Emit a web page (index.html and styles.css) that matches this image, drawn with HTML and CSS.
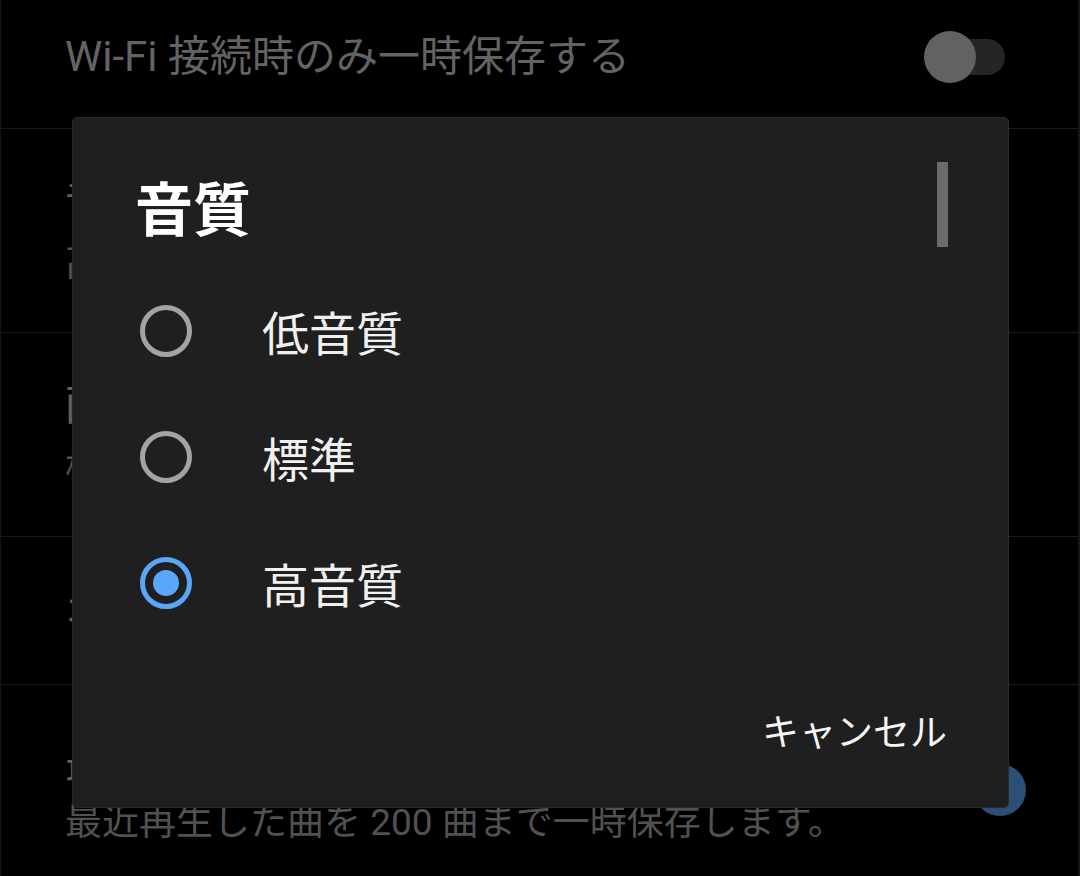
FILE: index.html
```html
<!DOCTYPE html>
<html lang="ja">
<head>
<meta charset="utf-8">
<title>音質</title>
<link rel="stylesheet" href="styles.css">
</head>
<body>
<div class="screen">
  <div class="list">
    <div class="row row-first">
      <div class="texts"><div class="title">Wi-Fi 接続時のみ一時保存する</div></div>
      <div class="switch"><span class="track"></span><span class="thumb"></span></div>
    </div>
    <div class="row row-two">
      <div class="texts">
        <div class="title">音質（モバイル ネットワーク）</div>
        <div class="sub">高音質</div>
      </div>
    </div>
    <div class="row row-two">
      <div class="texts">
        <div class="title">画質（モバイル ネットワーク）</div>
        <div class="sub">標準</div>
      </div>
    </div>
    <div class="row row-one">
      <div class="texts"><div class="title">オフライン ミックステープ</div></div>
    </div>
    <div class="row row-last">
      <div class="texts">
        <div class="title">最近再生した曲を一時保存</div>
        <div class="sub">最近再生した曲を 200 曲まで一時保存します。</div>
      </div>
      <div class="switch on"><span class="track"></span><span class="thumb"></span></div>
    </div>
  </div>

  <div class="dialog">
    <h1 class="dialog-title">音質</h1>
    <span class="scrollbar"></span>
    <ul class="options">
      <li class="option"><span class="radio"></span><span class="label">低音質</span></li>
      <li class="option"><span class="radio"></span><span class="label">標準</span></li>
      <li class="option"><span class="radio checked"></span><span class="label">高音質</span></li>
    </ul>
    <div class="actions"><span class="btn">キャンセル</span></div>
  </div>
</div>
</body>
</html>
```
FILE: styles.css
```css
* { box-sizing: border-box; }
html, body { margin: 0; padding: 0; background: #000; }
body {
  font-family: Roboto, "Noto Sans CJK JP", sans-serif;
  width: 1080px;
  height: 876px;
  overflow: hidden;
}
.screen {
  position: relative;
  width: 1080px;
  height: 876px;
  background: #000;
  border-left: 1px solid #161616;
  border-right: 2px solid #161616;
  overflow: hidden;
}
.list {
  display: flex;
  flex-direction: column;
}
.row {
  display: flex;
  align-items: center;
  justify-content: space-between;
  padding: 0 52px 0 64px;
  border-bottom: 1px solid #1a1a1a;
}
.row-first { height: 129px; padding-bottom: 14px; }
.row-two { height: 204px; align-items: flex-start; padding-top: 45px; }
.row-one { height: 148px; }
.row-last { height: 210px; border-bottom: none; align-items: center; }
.row-last .texts { padding-top: 8px; gap: 2px; }
.texts { display: flex; flex-direction: column; gap: 6px; }
.title {
  font-size: 42px;
  line-height: 56px;
  color: #636363;
  white-space: nowrap;
}
.sub {
  font-size: 37px;
  line-height: 56px;
  color: #515151;
  white-space: nowrap;
}
.switch {
  position: relative;
  width: 102px;
  height: 52px;
  flex: none;
}
.switch .track {
  position: absolute;
  left: 8px;
  top: 8px;
  width: 73px;
  height: 36px;
  border-radius: 18px;
  background: #252525;
}
.switch .thumb {
  position: absolute;
  left: 0;
  top: 0;
  width: 52px;
  height: 52px;
  border-radius: 50%;
  background: #626262;
}
.switch.on .track { left: 20px; width: 70px; background: #1d3550; }
.switch.on .thumb { left: 50px; background: #2c4f78; }

.dialog {
  position: absolute;
  left: 71px;
  top: 117px;
  width: 937px;
  height: 691px;
  background: #1f1f1f;
  border: 1px solid #2b2b2b;
  border-radius: 5px;
  display: flex;
  flex-direction: column;
  color: #f2f2f2;
  font-family: "Noto Sans CJK JP", sans-serif;
}
.dialog-title {
  margin: 0;
  padding: 52px 0 0 62px;
  font-size: 58px;
  line-height: 72px;
  font-weight: 700;
  color: #ffffff;
}
.scrollbar {
  position: absolute;
  left: 864px;
  top: 44px;
  width: 11px;
  height: 85px;
  background: #6b6b6b;
}
.options {
  list-style: none;
  margin: 26px 0 0;
  padding: 0;
  display: flex;
  flex-direction: column;
}
.option {
  height: 126px;
  display: flex;
  align-items: center;
  padding-left: 67px;
}
.radio {
  width: 52px;
  height: 52px;
  border: 5px solid #a3a3a3;
  border-radius: 50%;
  display: flex;
  align-items: center;
  justify-content: center;
  flex: none;
}
.radio.checked { border-color: #5aa6f8; }
.radio.checked::after {
  content: "";
  width: 26px;
  height: 26px;
  border-radius: 50%;
  background: #5aa6f8;
}
.label {
  margin-left: 70px;
  font-size: 47px;
  line-height: 60px;
  color: #f0f0f0;
}
.actions {
  margin-top: auto;
  display: flex;
  justify-content: flex-end;
  padding: 0 61px 52px 0;
}
.btn {
  font-size: 37px;
  line-height: 50px;
  color: #f5f5f5;
}
```
